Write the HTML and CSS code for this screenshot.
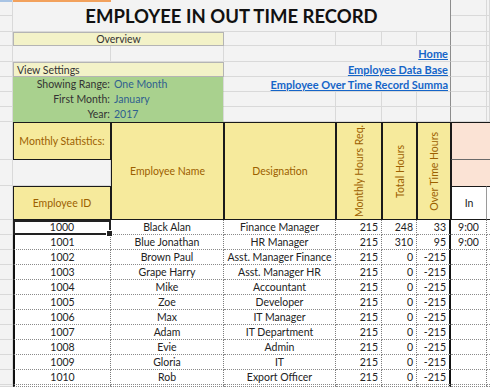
FILE: index.html
```html
<!DOCTYPE html>
<html lang="en">
<head>
    <meta charset="UTF-8">
    <meta name="viewport" content="width=device-width, initial-scale=1.0">
    <title>Employee In Out Time Record</title>
    <link rel="stylesheet" href="styles.css">
</head>
<body>

<div class="sheet">
    <!-- row 1-2: title -->
    <div class="g corner"></div>
    <div class="title">EMPLOYEE IN OUT TIME RECORD</div>
    <div class="g"></div><div class="g"></div>
    <div class="g"></div>
    <div class="g"></div><div class="g"></div>

    <!-- row 3: overview -->
    <div class="g"></div>
    <div class="overview">Overview</div>
    <div class="g"></div><div class="g"></div><div class="g"></div><div class="g freeze"></div>
    <div class="g"></div><div class="g"></div>

    <!-- row 4-6: links + view settings -->
    <div class="g"></div>
    <div class="g"></div><div class="g"></div>
    <div class="link-cell"><a href="#">Home</a></div>
    <div class="g"></div><div class="g"></div>

    <div class="g"></div>
    <div class="view-settings">View Settings</div>
    <div class="link-cell"><a href="#">Employee Data Base</a></div>
    <div class="g"></div><div class="g"></div>

    <div class="g"></div>
    <div class="green label">Showing Range:</div>
    <div class="green value">One Month</div>
    <div class="link-cell"><a href="#">Employee Over Time Record Summa</a></div>
    <div class="g"></div><div class="g"></div>

    <div class="g"></div>
    <div class="green label">First Month:</div>
    <div class="green value">January</div>
    <div class="g"></div><div class="g"></div><div class="g"></div><div class="g freeze"></div>
    <div class="g"></div><div class="g"></div>

    <div class="g"></div>
    <div class="green label">Year:</div>
    <div class="green value">2017</div>
    <div class="g"></div><div class="g"></div><div class="g"></div><div class="g freeze"></div>
    <div class="g"></div><div class="g"></div>

    <!-- header block -->
    <div class="g"></div>
    <div class="hdr">Monthly Statistics:</div>
    <div class="hdr tall">Employee Name</div>
    <div class="hdr tall">Designation</div>
    <div class="hdr tall rot"><span>Monthly Hours Req.</span></div>
    <div class="hdr tall rot"><span>Total Hours</span></div>
    <div class="hdr tall rot"><span>Over Time Hours</span></div>
    <div class="peach top"></div>

    <div class="g"></div>
    <div class="g"></div>
    <div class="peach"></div>

    <div class="g"></div>
    <div class="hdr">Employee ID</div>
    <div class="in-head">In</div>
    <div class="in-rest"></div>

    <!-- data rows -->
    <div class="g"></div>
    <div class="d id selected">1000</div><div class="d">Black Alan</div><div class="d">Finance Manager</div>
    <div class="d num">215</div><div class="d num">248</div><div class="d num ot">33</div><div class="d">9:00</div><div class="d rest"></div>

    <div class="g"></div>
    <div class="d id">1001</div><div class="d">Blue Jonathan</div><div class="d">HR Manager</div>
    <div class="d num">215</div><div class="d num">310</div><div class="d num ot">95</div><div class="d">9:00</div><div class="d rest"></div>

    <div class="g"></div>
    <div class="d id">1002</div><div class="d">Brown Paul</div><div class="d">Asst. Manager Finance</div>
    <div class="d num">215</div><div class="d num">0</div><div class="d num ot">-215</div><div class="d"></div><div class="d rest"></div>

    <div class="g"></div>
    <div class="d id">1003</div><div class="d">Grape Harry</div><div class="d">Asst. Manager HR</div>
    <div class="d num">215</div><div class="d num">0</div><div class="d num ot">-215</div><div class="d"></div><div class="d rest"></div>

    <div class="g"></div>
    <div class="d id">1004</div><div class="d">Mike</div><div class="d">Accountant</div>
    <div class="d num">215</div><div class="d num">0</div><div class="d num ot">-215</div><div class="d"></div><div class="d rest"></div>

    <div class="g"></div>
    <div class="d id">1005</div><div class="d">Zoe</div><div class="d">Developer</div>
    <div class="d num">215</div><div class="d num">0</div><div class="d num ot">-215</div><div class="d"></div><div class="d rest"></div>

    <div class="g"></div>
    <div class="d id">1006</div><div class="d">Max</div><div class="d">IT Manager</div>
    <div class="d num">215</div><div class="d num">0</div><div class="d num ot">-215</div><div class="d"></div><div class="d rest"></div>

    <div class="g"></div>
    <div class="d id">1007</div><div class="d">Adam</div><div class="d">IT Department</div>
    <div class="d num">215</div><div class="d num">0</div><div class="d num ot">-215</div><div class="d"></div><div class="d rest"></div>

    <div class="g"></div>
    <div class="d id">1008</div><div class="d">Evie</div><div class="d">Admin</div>
    <div class="d num">215</div><div class="d num">0</div><div class="d num ot">-215</div><div class="d"></div><div class="d rest"></div>

    <div class="g"></div>
    <div class="d id">1009</div><div class="d">Gloria</div><div class="d">IT</div>
    <div class="d num">215</div><div class="d num">0</div><div class="d num ot">-215</div><div class="d"></div><div class="d rest"></div>

    <div class="g"></div>
    <div class="d id">1010</div><div class="d">Rob</div><div class="d">Export Officer</div>
    <div class="d num">215</div><div class="d num">0</div><div class="d num ot">-215</div><div class="d"></div><div class="d rest"></div>

    <div class="g"></div>
    <div class="d id"></div><div class="d"></div><div class="d"></div>
    <div class="d"></div><div class="d"></div><div class="d ot"></div><div class="d"></div><div class="d rest"></div>
</div>

</body>
</html>
```

FILE: styles.css
```css
body {
    margin: 0;
    overflow: hidden;
    background-color: #f3f3f3;
    font-family: Lato, "Open Sans", sans-serif;
    font-size: 10.5px;
    color: #222;
}
.sheet {
    display: grid;
    grid-template-columns: 13px 98px 113px 112px 46px 35px 34px 36px 1fr;
    grid-template-rows: 16px 16px 14px 16px 15px 15px 15px 15px 38px 26px 34px repeat(11, 15px) 1fr;
    width: 490px;
    height: 387px;
}
.sheet > div {
    box-sizing: border-box;
    min-width: 0;
    overflow: hidden;
    white-space: nowrap;
}
.g {
    border-right: 1px solid #d9d9d9;
    border-bottom: 1px solid #d9d9d9;
}
.g.freeze {
    border-right-color: #8c8c8c;
}
.corner {
    background: linear-gradient(#a9c4e4, #a9c4e4) 0 0 / 100% 2px no-repeat;
}
.title {
    grid-column: span 6;
    grid-row: span 2;
    display: flex;
    align-items: center;
    justify-content: center;
    font-size: 18.5px;
    font-weight: bold;
    color: #111;
    border-right: 1px solid #8c8c8c;
    border-bottom: 1px solid #d9d9d9;
    background: linear-gradient(#f2a15c, #f2a15c) 0 0 / 98px 2px no-repeat;
}
.overview,
.view-settings {
    grid-column: span 2;
    background-color: #f3f2c8;
    border: 1px solid #b4b4b4;
    color: #333;
    display: flex;
    align-items: center;
}
.overview {
    justify-content: center;
}
.view-settings {
    padding-left: 3px;
}
.link-cell {
    grid-column: span 4;
    display: flex;
    align-items: center;
    justify-content: flex-end;
    padding-right: 2px;
    border-right: 1px solid #8c8c8c;
    border-bottom: 1px solid #d9d9d9;
}
.link-cell a {
    color: #1565c8;
    font-size: 11px;
    font-weight: bold;
    text-decoration: underline;
}
.green {
    background-color: #a9d18e;
    display: flex;
    align-items: center;
    border-bottom: 1px solid #a9d18e;
}
.green.label {
    justify-content: flex-end;
    padding-right: 1px;
    color: #333;
}
.green.value {
    padding-left: 3px;
    color: #2f5f8e;
    border-right: 1px solid #d9d9d9;
}
.hdr {
    background-color: #f6ea9c;
    color: #9c6000;
    border: 1px solid #1a1a1a;
    display: flex;
    align-items: center;
    justify-content: center;
}
.hdr.tall {
    grid-row: span 3;
}
.hdr.rot span {
    writing-mode: vertical-rl;
    transform: rotate(180deg);
}
.peach {
    grid-column: span 2;
    background-color: #fbe3d5;
    border-left: 1px solid #1a1a1a;
}
.peach.top {
    border-top: 1px solid #1a1a1a;
    border-bottom: 1px solid #6a6a6a;
}
.in-head {
    background-color: #fff;
    border-top: 1px solid #1a1a1a;
    border-left: 1px solid #1a1a1a;
    border-right: 1px solid #9a9a9a;
    border-bottom: 1px solid #1a1a1a;
    display: flex;
    align-items: center;
    justify-content: center;
}
.in-rest {
    background-color: #fff;
    border-top: 1px solid #1a1a1a;
    border-bottom: 1px solid #1a1a1a;
}
.d {
    background-color: #fff;
    border-right: 1px dotted #7a7a7a;
    border-bottom: 1px dotted #8a8a8a;
    text-align: center;
    line-height: 14px;
}
.d.id {
    border-left: 2px solid #111;
}
.d.num {
    text-align: right;
    padding-right: 3px;
}
.d.ot {
    border-right: 2px solid #111;
}
.d.rest {
    border-right: none;
}
.sheet > .d.selected {
    border: 2px solid #222;
    line-height: 11px;
    overflow: visible;
    position: relative;
}
.d.selected::after {
    content: "";
    position: absolute;
    right: -4px;
    bottom: -4px;
    width: 5px;
    height: 5px;
    background-color: #222;
    border: 1px solid #fff;
}
```
